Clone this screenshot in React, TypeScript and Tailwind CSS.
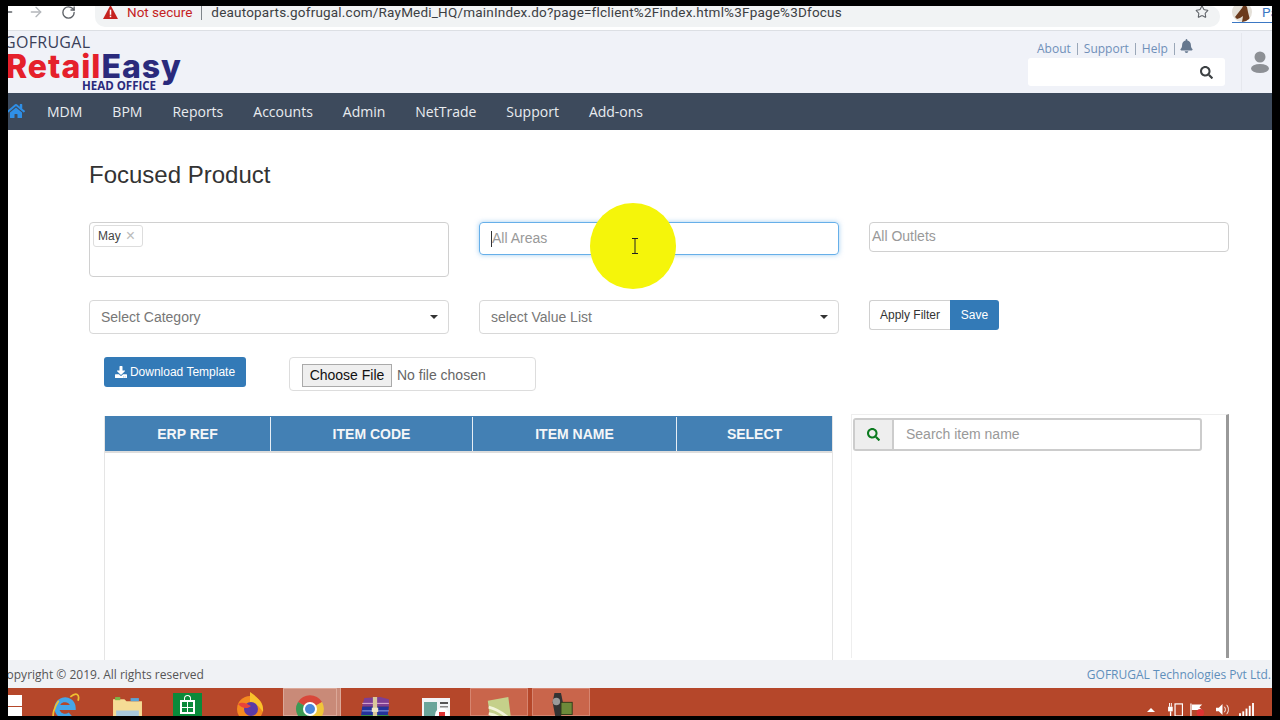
import { FaBell, FaDownload, FaHome, FaSearch } from 'react-icons/fa';
import { ArrowLeft, ArrowRight, RotateCw, Star } from 'lucide-react';

const menu = ['MDM', 'BPM', 'Reports', 'Accounts', 'Admin', 'NetTrade', 'Support', 'Add-ons'];

function BrowserBar() {
  return (
    <div className="h-[24px] bg-white flex items-start shrink-0 font-['Roboto',sans-serif] leading-[12px]">
      <div className="w-[87px] h-[21px] pb-[9px] flex items-center text-[#5f6368]">
        <ArrowLeft className="w-[16px] h-[16px] -ml-[9px]" strokeWidth={2} />
        <ArrowRight className="w-[16px] h-[16px] ml-[13px] text-[#b4b7bb]" strokeWidth={2} />
        <RotateCw className="w-[15px] h-[15px] ml-[17px]" strokeWidth={2.2} />
      </div>
      <div className="w-[1125px] h-[21px] pb-[9px] bg-[#f1f3f4] rounded-r-[10px] rounded-bl-[10px] flex items-center pl-[8px]">
        <svg viewBox="0 0 16 15" className="w-[15px] h-[14px]">
          <path d="M8 0 16 15H0Z" fill="#c5221f" />
          <rect x="7.2" y="5" width="1.6" height="5.5" fill="#fff" />
          <rect x="7.2" y="11.4" width="1.6" height="1.7" fill="#fff" />
        </svg>
        <span className="ml-[9px] text-[13.5px] text-[#c5221f]">Not secure</span>
        <span className="ml-[9px] w-px h-[15px] bg-[#80868b]" />
        <span className="ml-[9px] text-[13.5px] tracking-[0.2px] text-[#3c4043]">
          deautoparts.gofrugal.com/RayMedi_HQ/mainIndex.do?page=flclient%2Findex.html%3Fpage%3Dfocus
        </span>
        <Star className="w-[14px] h-[14px] ml-auto mr-[11px] text-[#5f6368]" strokeWidth={1.8} />
      </div>
      <div className="ml-[12px] w-[40px] h-[17px] border-b border-[#3b78c4] flex items-start overflow-hidden">
        <svg viewBox="0 0 20 20" className="w-[20px] h-[20px] -mt-[4px] shrink-0 rounded-full bg-[#e4e0d8]">
          <path d="M3 15 10 6l2-4 3 3 1 5 2 8-2 2h-6l1-6-3 2-3 1Z" fill="#6b3a1c" />
        </svg>
        <span className="ml-[10px] text-[13.5px] text-[#3b78c4]">Pa</span>
      </div>
    </div>
  );
}

function AppHeader() {
  return (
    <div className="h-[63px] bg-[#f0f2f8] border-t border-[#dcdfe4] flex shrink-0 overflow-hidden">
      <div className="w-[190px] pt-[4px] flex flex-col">
        <span className="font-['Open_Sans',sans-serif] text-[16px] leading-[15px] text-[#3a3f58] -ml-[4px] tracking-[0.3px]">
          GOFRUGAL
        </span>
        <span className="font-['Inter',sans-serif] font-extrabold text-[32px] leading-[30px] -ml-[2px] tracking-[1px] mt-[2px]">
          <span className="text-[#e5202b]">Retail</span>
          <span className="text-[#2a2a7c]">Easy</span>
        </span>
        <span className="font-['Open_Sans',sans-serif] font-bold text-[11.5px] leading-[10px] text-[#2a2a7c] ml-[74px] -mt-[1px]">
          HEAD OFFICE
        </span>
      </div>
      <div className="ml-auto w-[197px] mr-[16px] flex flex-col font-['Open_Sans',sans-serif] text-[12px] text-[#6f8fb8]">
        <div className="h-[27px] flex items-end pl-[9px] gap-[6px] leading-[18px] whitespace-nowrap">
          <span>About</span>
          <span className="w-px h-[12px] bg-[#9aa7b8] mb-[3px]" />
          <span>Support</span>
          <span className="w-px h-[12px] bg-[#9aa7b8] mb-[3px]" />
          <span>Help</span>
          <span className="w-px h-[12px] bg-[#9aa7b8] mb-[3px]" />
          <FaBell className="w-[13px] h-[14px] mb-[5px] -ml-[1px] text-[#66788f]" />
        </div>
        <div className="h-[28px] bg-white rounded-[3px] flex items-center justify-end pr-[12px]">
          <FaSearch className="w-[13px] h-[13px] text-[#3c4043]" />
        </div>
      </div>
      <div className="w-[31px] border-l border-[#e6e8ee] my-[2px] flex items-center pl-[9px] overflow-hidden">
        <svg viewBox="0 0 18 22" className="w-[18px] h-[22px] shrink-0">
          <circle cx="9" cy="6" r="5.5" fill="#8d9095" />
          <ellipse cx="9" cy="17.5" rx="9" ry="4.5" fill="#8d9095" />
        </svg>
      </div>
    </div>
  );
}

function NavBar() {
  return (
    <div className="h-[37px] bg-[#3d4a5c] flex items-center shrink-0 font-['Open_Sans',sans-serif] text-[14px] text-[#e9ecf0]">
      <FaHome className="w-[18px] h-[16px] -ml-[1px] mb-[2px] text-[#2f8fe6]" />
      <div className="flex gap-[30px] ml-[22px]">
        {menu.map((m) => (
          <span key={m}>{m}</span>
        ))}
      </div>
    </div>
  );
}

function Filters() {
  return (
    <div className="pl-[81px] font-['Liberation_Sans',sans-serif] text-[14px]">
      <div className="grid grid-cols-[360px_360px_360px] gap-x-[30px] items-start">
        <div className="h-[55px] border border-[#d0d0d0] rounded-[4px] pl-[3px] pt-[2px]">
          <span className="inline-flex items-center w-[50px] h-[22px] pl-[4px] border border-[#ddd] rounded-[3px] text-[12px] text-[#444]">
            May <span className="ml-[5px] text-[16px] leading-[14px] text-[#bbb]">×</span>
          </span>
        </div>
        <div className="h-[33px] border border-[#66afe9] rounded-[4px] shadow-[0_0_5px_rgba(102,175,233,0.6)] flex items-center pl-[11px] text-[#999]">
          <span className="w-px h-[16px] bg-[#333]" />
          All Areas
        </div>
        <div className="h-[30px] pb-[1px] border border-[#d0d0d0] rounded-[4px] flex items-center pl-[2px] text-[#999]">
          All Outlets
        </div>
      </div>
      <div className="grid grid-cols-[360px_360px_360px] gap-x-[30px] items-start mt-[23px]">
        <div className="h-[34px] border border-[#d8d8d8] rounded-[4px] flex items-center justify-between pl-[11px] pr-[10px] text-[#777]">
          Select Category
          <span className="border-x-[4px] border-x-transparent border-t-[4px] border-t-[#333]" />
        </div>
        <div className="h-[34px] border border-[#d8d8d8] rounded-[4px] flex items-center justify-between pl-[11px] pr-[10px] text-[#777]">
          select Value List
          <span className="border-x-[4px] border-x-transparent border-t-[4px] border-t-[#333]" />
        </div>
        <div className="flex text-[12px]">
          <button className="h-[30px] w-[81px] border border-[#d0d0d0] border-r-0 rounded-l-[3px] text-[#333]">Apply Filter</button>
          <button className="h-[30px] w-[49px] bg-[#337ab7] rounded-r-[3px] text-white">Save</button>
        </div>
      </div>
    </div>
  );
}

function UploadRow() {
  return (
    <div className="mt-[23px] pl-[96px] flex items-start font-['Liberation_Sans',sans-serif]">
      <button className="w-[142px] h-[30px] bg-[#337ab7] rounded-[3px] flex items-center justify-center gap-[3px] text-[12px] text-white">
        <FaDownload className="w-[12px] h-[12px]" /> Download Template
      </button>
      <div className="ml-[43px] w-[247px] h-[34px] pt-[2px] border border-[#ddd] rounded-[4px] flex items-center pl-[12px] text-[14px] text-[#666]">
        <span className="h-[23px] w-[90px] bg-[#efefef] border border-[#aaa] flex items-center justify-center text-[#111]">Choose File</span>
        <span className="ml-[5px]">No file chosen</span>
      </div>
    </div>
  );
}

function ItemTable() {
  return (
    <div className="mt-[25px] ml-[96px] flex items-start font-['Liberation_Sans',sans-serif] flex-1 min-h-0">
      <div className="w-[729px] h-full border-x border-[#e5e5e5]">
        <div className="h-[37px] pt-[1px] bg-[#4380b4] border-b-2 border-[#ddd] grid grid-cols-[166px_202px_204px_1fr] text-[14px] font-bold text-[#f4f6f8]">
          <div className="flex items-center justify-center border-r border-[#e6eef5]">ERP REF</div>
          <div className="flex items-center justify-center border-r border-[#e6eef5]">ITEM CODE</div>
          <div className="flex items-center justify-center border-r border-[#e6eef5]">ITEM NAME</div>
          <div className="flex items-center justify-center">SELECT</div>
        </div>
      </div>
      <div className="ml-[18px] -mt-[2px] w-[378px] h-full border-l border-t border-[#eee] border-r-[3px] border-r-[#999] pt-[3px] pl-[1px]">
        <div className="w-[349px] h-[33px] border-2 border-[#ccc] rounded-[3px] flex items-center text-[14px] text-[#999]">
          <div className="w-[39px] h-full bg-[#eee] border-r-2 border-[#ccc] flex items-center justify-center">
            <FaSearch className="w-[13px] h-[13px] text-[#0b7a1f]" />
          </div>
          <span className="ml-[12px]">Search item name</span>
        </div>
      </div>
    </div>
  );
}

function Footer() {
  return (
    <div className="h-[28px] pt-[1px] bg-[#f0f2f5] flex items-center justify-between shrink-0 font-['Open_Sans',sans-serif] text-[12px] overflow-hidden">
      <span className="-ml-[9px] text-[#555]">Copyright © 2019. All rights reserved</span>
      <span className="text-[#5f8fbb] mr-[1px]">GOFRUGAL Technologies Pvt Ltd.</span>
    </div>
  );
}

function TaskIcon({ children, className }: { children: React.ReactNode; className: string }) {
  return <div className={`${className} h-[28px] flex justify-center items-start overflow-hidden shrink-0`}>{children}</div>;
}

function Taskbar() {
  return (
    <div className="h-[28px] bg-[#b5472a] flex shrink-0 overflow-hidden">
      <div className="w-[14px] h-full pt-[7px] shrink-0">
        <div className="h-[11px] bg-white" />
        <div className="h-[10px] mt-[1px] bg-white" />
      </div>
      <TaskIcon className="w-[74px] pl-[12px] pt-[4px]">
        <svg viewBox="0 0 30 30" className="w-[29px] h-[29px]">
          <path d="M8 16h15a8.5 8.5 0 1 0-3 7" fill="none" stroke="#46a6e8" strokeWidth="5" />
          <path d="M20 5c6-5 10-3 8 4M8 9C3 16 1 24 3 28" fill="none" stroke="#f0c030" strokeWidth="1.8" />
        </svg>
      </TaskIcon>
      <TaskIcon className="w-[62px] pt-[7px]">
        <svg viewBox="0 0 30 30" className="w-[31px] h-[31px]">
          <path d="M1 4h11l2 2h15v24H1Z" fill="#f5dc95" />
          <rect x="3" y="2" width="5" height="3" fill="#7ab648" />
          <rect x="18" y="3" width="8" height="3" fill="#5aa5d8" />
          <rect x="4" y="15" width="22" height="15" fill="#a9c9dc" />
        </svg>
      </TaskIcon>
      <TaskIcon className="w-[58px] pt-[5px]">
        <div className="w-[29px] h-[26px] bg-[#0a8a3a] flex flex-col items-center pt-[2px]">
          <span className="w-[7px] h-[5px] border border-b-0 border-white rounded-t-[4px]" />
          <div className="w-[15px] h-[14px] bg-white grid grid-cols-2 gap-px p-[2px]">
            <span className="bg-[#0a8a3a]" />
            <span className="bg-[#0a8a3a]" />
            <span className="bg-[#0a8a3a]" />
            <span className="bg-[#0a8a3a]" />
          </div>
        </div>
      </TaskIcon>
      <TaskIcon className="w-[67px] pt-[4px]">
        <svg viewBox="0 0 30 30" className="w-[30px] h-[30px]">
          <circle cx="15" cy="17" r="13" fill="#f58a1f" />
          <path d="M15 0c9 6 14 12 13 20-4-6-8-9-13-10Z" fill="#f9c32c" />
          <circle cx="16" cy="17" r="7" fill="#5b3aa5" />
          <path d="M3 12c5-3 9 0 13 2-3 3-9 3-13-2Z" fill="#e8443a" />
        </svg>
      </TaskIcon>
      <div className="w-[54px] h-full bg-[#c98a78] border border-[#dba898] shrink-0 flex justify-center pt-[5px]">
        <svg viewBox="0 0 30 30" className="w-[30px] h-[30px] shrink-0">
          <path d="M15 15 3 8a14 14 0 0 1 24 0Z" fill="#d9473a" />
          <path d="M15 15 27 8a14 14 0 0 1-11 21Z" fill="#f0c53a" />
          <path d="M15 15 16 29A14 14 0 0 1 3 8Z" fill="#3c9a55" />
          <circle cx="15" cy="15" r="7" fill="#fff" />
          <circle cx="15" cy="15" r="5" fill="#4a87d9" />
        </svg>
      </div>
      <div className="w-[4px] h-full bg-[#c98a78] border-r border-[#dba898] shrink-0" />
      <TaskIcon className="w-[68px] pt-[9px]">
        <svg viewBox="0 0 30 30" className="w-[32px] h-[32px]">
          <path d="M5 1 20 0l8 2v7H3Z" fill="#7e3f94" />
          <path d="M3 6h25" stroke="#d9a8d0" strokeWidth="1" />
          <path d="M3 9h25l-1 8H2Z" fill="#23339c" />
          <path d="M3 13h25" stroke="#8fa0e0" strokeWidth="1" />
          <rect x="2" y="17" width="26" height="9" fill="#2f9a4a" />
          <rect x="13" y="0" width="4" height="26" fill="#d9c89a" />
          <rect x="12" y="10" width="6" height="4" fill="#efe6c8" />
        </svg>
      </TaskIcon>
      <TaskIcon className="w-[54px] pt-[9px]">
        <svg viewBox="0 0 30 30" className="w-[30px] h-[30px]">
          <rect x="1" y="1" width="28" height="29" fill="#f2f4f6" />
          <rect x="3" y="5" width="13" height="15" fill="#6aa59a" />
          <rect x="19" y="5" width="8" height="2" fill="#555" />
          <rect x="19" y="9" width="8" height="1.5" fill="#888" />
          <circle cx="21" cy="18" r="7" fill="#fff" />
          <rect x="18" y="15" width="6" height="6" fill="#d33" />
        </svg>
      </TaskIcon>
      <div className="w-[58px] h-full ml-[7px] bg-[#c9654b] border border-[#d68570] shrink-0 flex justify-center pt-[7px]">
        <svg viewBox="0 0 30 30" className="w-[28px] h-[28px] shrink-0">
          <path d="M3 5 25 1l3 24-22 3Z" fill="#c5d08a" />
          <path d="M4 12c8 2 16 7 23 13M4 19c6 1 12 4 17 8" stroke="#f2f4d8" strokeWidth="3" fill="none" />
        </svg>
      </div>
      <div className="w-[58px] h-full ml-[4px] bg-[#c9654b] border border-[#d68570] shrink-0 flex justify-center pt-[4px]">
        <svg viewBox="0 0 30 30" className="w-[28px] h-[28px] shrink-0">
          <path d="M8 0h7l2 10-2 16H9L6 10Z" fill="#333" />
          <circle cx="10" cy="9" r="4" fill="#9a9a9a" />
          <rect x="15" y="10" width="12" height="13" fill="#6d8a3a" stroke="#2f3a18" />
        </svg>
      </div>
      <div className="ml-auto mr-[18px] flex items-center pt-[15px] text-white">
        <span className="border-x-[4px] border-x-transparent border-b-[4px] border-b-white" />
        <svg viewBox="0 0 16 14" className="w-[15px] h-[13px] ml-[13px]">
          <rect x="0" y="4" width="5" height="5" fill="#fff" />
          <rect x="2" y="9" width="1.4" height="5" fill="#fff" />
          <rect x="1" y="0" width="1" height="4" fill="#fff" />
          <rect x="3" y="0" width="1" height="4" fill="#fff" />
          <rect x="7.5" y="1" width="8" height="13" fill="none" stroke="#fff" strokeWidth="1.3" />
        </svg>
        <svg viewBox="0 0 16 14" className="w-[15px] h-[14px] ml-[7px]">
          <path d="M1 0v14" stroke="#fff" strokeWidth="1.3" />
          <path d="M2 1h11l-3 3 3 3H2Z" fill="#fff" />
          <circle cx="11" cy="10" r="4" fill="#d33" />
        </svg>
        <svg viewBox="0 0 16 14" className="w-[15px] h-[13px] ml-[10px]">
          <path d="M1 5h3l4-4v12L4 9H1Z" fill="#fff" />
          <path d="M10 4c1.5 2 1.5 4 0 6M12.5 2c2.5 3 2.5 7 0 10" stroke="#fff" fill="none" />
        </svg>
        <svg viewBox="0 0 16 14" className="w-[15px] h-[13px] ml-[9px]">
          <rect x="0" y="11" width="2" height="3" fill="#fff" />
          <rect x="3.5" y="9" width="2" height="5" fill="#fff" />
          <rect x="7" y="6" width="2" height="8" fill="#fff" />
          <rect x="10.5" y="3" width="2" height="11" fill="#fff" />
          <rect x="14" y="0" width="2" height="14" fill="#fff" />
        </svg>
      </div>
    </div>
  );
}

export default function App() {
  return (
    <div className="relative w-[1280px] h-[720px] bg-black pt-[6px] pb-[4px] px-[8px] overflow-hidden">
      <div className="h-full flex flex-col bg-white overflow-hidden">
        <BrowserBar />
        <AppHeader />
        <NavBar />
        <div className="flex-1 min-h-0 flex flex-col overflow-hidden">
          <h1 className="pl-[81px] pt-[30px] h-[92px] font-['Liberation_Sans',sans-serif] text-[24px] leading-[30px] text-[#333]">
            Focused Product
          </h1>
          <Filters />
          <UploadRow />
          <ItemTable />
        </div>
        <Footer />
        <Taskbar />
      </div>
      {/* highlight around the mouse pointer */}
      <div className="absolute left-[590px] top-[203px] w-[86px] h-[86px] rounded-full bg-[#f5f50a]" />
      <svg viewBox="0 0 8 16" className="absolute left-[631px] top-[238px] w-[8px] h-[16px]">
        <path d="M1 .5h6M4 .5v15M1 15.5h6" stroke="#222" fill="none" />
      </svg>
    </div>
  );
}
